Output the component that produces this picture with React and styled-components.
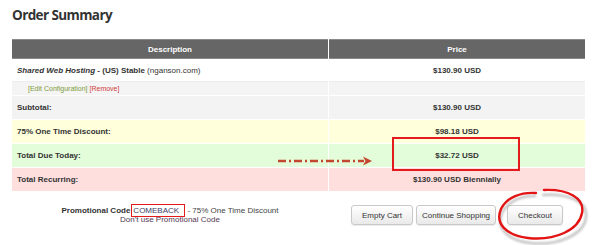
import React from 'react';
import styled, { createGlobalStyle } from 'styled-components';

const GlobalStyle = createGlobalStyle`
  html, body {
    margin: 0;
    padding: 0;
    background: #ffffff;
  }
  body {
    font-family: "Liberation Sans", Arial, sans-serif;
    color: #333;
  }
`;

const Page = styled.div`
  position: relative;
  width: 600px;
  height: 245px;
  padding: 6px 14px 0 12px;
  box-sizing: border-box;
  overflow: hidden;
`;

const Title = styled.h1`
  margin: 0 0 14px 0;
  font-family: "Open Sans", sans-serif;
  font-size: 13.5px;
  line-height: 19px;
  font-weight: 700;
  letter-spacing: -0.6px;
  color: #333;
`;

const Table = styled.table`
  width: 575px;
  border-collapse: separate;
  border-spacing: 1px;
  margin: -1px 0 0 -1px;
  font-size: 8px;
  table-layout: fixed;
`;

const HeadCell = styled.th`
  height: 18px;
  padding: 0;
  background: #666;
  border-top: 1px solid #8a8a8a;
  border-bottom: 1px solid #8a8a8a;
  color: #fff;
  font-weight: 700;
  text-align: center;
  width: ${(p) => p.$w || 'auto'};
`;

const rowColors = {
  white: '#ffffff',
  light: '#f4f4f4',
  gray: '#f3f3f3',
  yellow: '#ffffdc',
  green: '#e3fdda',
  pink: '#ffdfde',
};

const Cell = styled.td`
  height: ${(p) => p.$h || 23}px;
  padding: 0 0 0 5px;
  background: ${(p) => rowColors[p.$tone || 'white']};
  font-weight: ${(p) => (p.$bold ? 700 : 400)};
  text-align: left;
  vertical-align: middle;
  color: #333;
  white-space: nowrap;
  border-top: ${(p) => (p.$line ? '1px solid #ececec' : 'none')};
`;

const PriceCell = styled(Cell)`
  padding: 0;
  text-align: center;
  font-weight: 700;
`;

const Product = styled.em`
  font-weight: 700;
`;

const Small = styled.span`
  font-size: 7px;
  padding-left: 11px;
`;

const EditLink = styled.span`
  color: ${(p) => (p.$red ? '#d23b3b' : '#7e9b3a')};
`;

const Bottom = styled.div`
  display: grid;
  grid-template-columns: 316px 258px;
  align-items: center;
  margin-top: 13px;
`;

const Promo = styled.div`
  text-align: center;
  font-size: 8px;
  line-height: 9px;
  color: #444;
  padding-bottom: 1px;
`;

const PromoLabel = styled.b`
  color: #333;
`;

const Code = styled.span`
  display: inline-block;
  border: 1.5px solid #e41b1b;
  padding: 1px 5px 1px 1px;
  margin: -2px 0 -2px 1px;
  line-height: 9px;
  color: #3d3d66;
`;

const Unlink = styled.span`
  color: #553a55;
`;

const Buttons = styled.div`
  display: flex;
  justify-content: flex-start;
  gap: 3px;
  padding-left: 23px;
`;

const Button = styled.button`
  box-sizing: border-box;
  height: 20px;
  padding: 0 ${(p) => p.$pad ?? 10}px;
  margin-left: ${(p) => (p.$spaced ? 8 : 0)}px;
  border: 1px solid #c9c9c9;
  border-radius: 3px;
  background: linear-gradient(#ffffff, #e9e9e9);
  box-shadow: 0 1px 1px rgba(0, 0, 0, 0.08);
  font-family: "Liberation Sans", Arial, sans-serif;
  font-size: 8px;
  color: #333;
  cursor: pointer;
`;

const HighlightBox = styled.div`
  position: absolute;
  left: 392px;
  top: 137px;
  width: 124px;
  height: 30px;
  border: 2px solid #e41b1b;
  pointer-events: none;
`;

const Overlay = styled.svg`
  position: absolute;
  left: 0;
  top: 0;
  pointer-events: none;
`;

export default function App() {
  return (
    <>
      <GlobalStyle />
      <Page>
        <Title>Order Summary</Title>
        <Table>
          <thead>
            <tr>
              <HeadCell $w="316px">Description</HeadCell>
              <HeadCell>Price</HeadCell>
            </tr>
          </thead>
          <tbody>
            <tr>
              <Cell $h={20}>
                <Product>Shared Web Hosting</Product> <b>- (US) Stable</b> (nganson.com)
              </Cell>
              <PriceCell $h={20}>$130.90 USD</PriceCell>
            </tr>
            <tr>
              <Cell $h={13} $tone="light" $line>
                <Small>
                  <EditLink>[Edit Configuration]</EditLink> <EditLink $red>[Remove]</EditLink>
                </Small>
              </Cell>
              <PriceCell $h={13} $tone="light" $line />
            </tr>
            <tr>
              <Cell $tone="gray" $bold>Subtotal:</Cell>
              <PriceCell $tone="gray">$130.90 USD</PriceCell>
            </tr>
            <tr>
              <Cell $tone="yellow" $bold>75% One Time Discount:</Cell>
              <PriceCell $tone="yellow">$98.18 USD</PriceCell>
            </tr>
            <tr>
              <Cell $tone="green" $bold>Total Due Today:</Cell>
              <PriceCell $tone="green">$32.72 USD</PriceCell>
            </tr>
            <tr>
              <Cell $tone="pink" $bold>Total Recurring:</Cell>
              <PriceCell $tone="pink">$130.90 USD Biennially</PriceCell>
            </tr>
          </tbody>
        </Table>

        <Bottom>
          <Promo>
            <PromoLabel>Promotional Code</PromoLabel>
            <Code>COMEBACK</Code> - 75% One Time Discount
            <br />
            <Unlink>Don't use Promotional Code</Unlink>
          </Promo>
          <Buttons>
            <Button>Empty Cart</Button>
            <Button $pad={5}>Continue Shopping</Button>
            <Button $spaced>Checkout</Button>
          </Buttons>
        </Bottom>

        <HighlightBox />

        <Overlay width="600" height="245" viewBox="0 0 600 245">
          <defs>
            <filter id="blur" x="-20%" y="-20%" width="140%" height="140%">
              <feGaussianBlur stdDeviation="1.2" />
            </filter>
          </defs>
          {/* dash-dot arrow */}
          <line
            x1="278"
            y1="161"
            x2="364"
            y2="161"
            stroke="#c4462f"
            strokeWidth="2.4"
            strokeDasharray="8 3 2 3"
          />
          <path d="M363 156.5 L372 161 L363 165.5 L365.5 161 Z" fill="#c4462f" />

          {/* hand-drawn circle around checkout */}
          <path
            d="M540 192 C566 190 586 198 584 214 C582 232 556 243 528 240 C504 237 494 224 500 210 C506 198 520 192 534 193"
            fill="none"
            stroke="#9a9a9a"
            strokeWidth="2.5"
            opacity="0.6"
            transform="translate(2 3)"
            filter="url(#blur)"
          />
          <path
            d="M544 190 C568 189 585 198 582 213 C579 230 555 241 528 238 C505 235 495 223 501 209 C507 197 521 192 536 193"
            fill="none"
            stroke="#e31414"
            strokeWidth="2.4"
            strokeLinecap="round"
          />
        </Overlay>
      </Page>
    </>
  );
}
